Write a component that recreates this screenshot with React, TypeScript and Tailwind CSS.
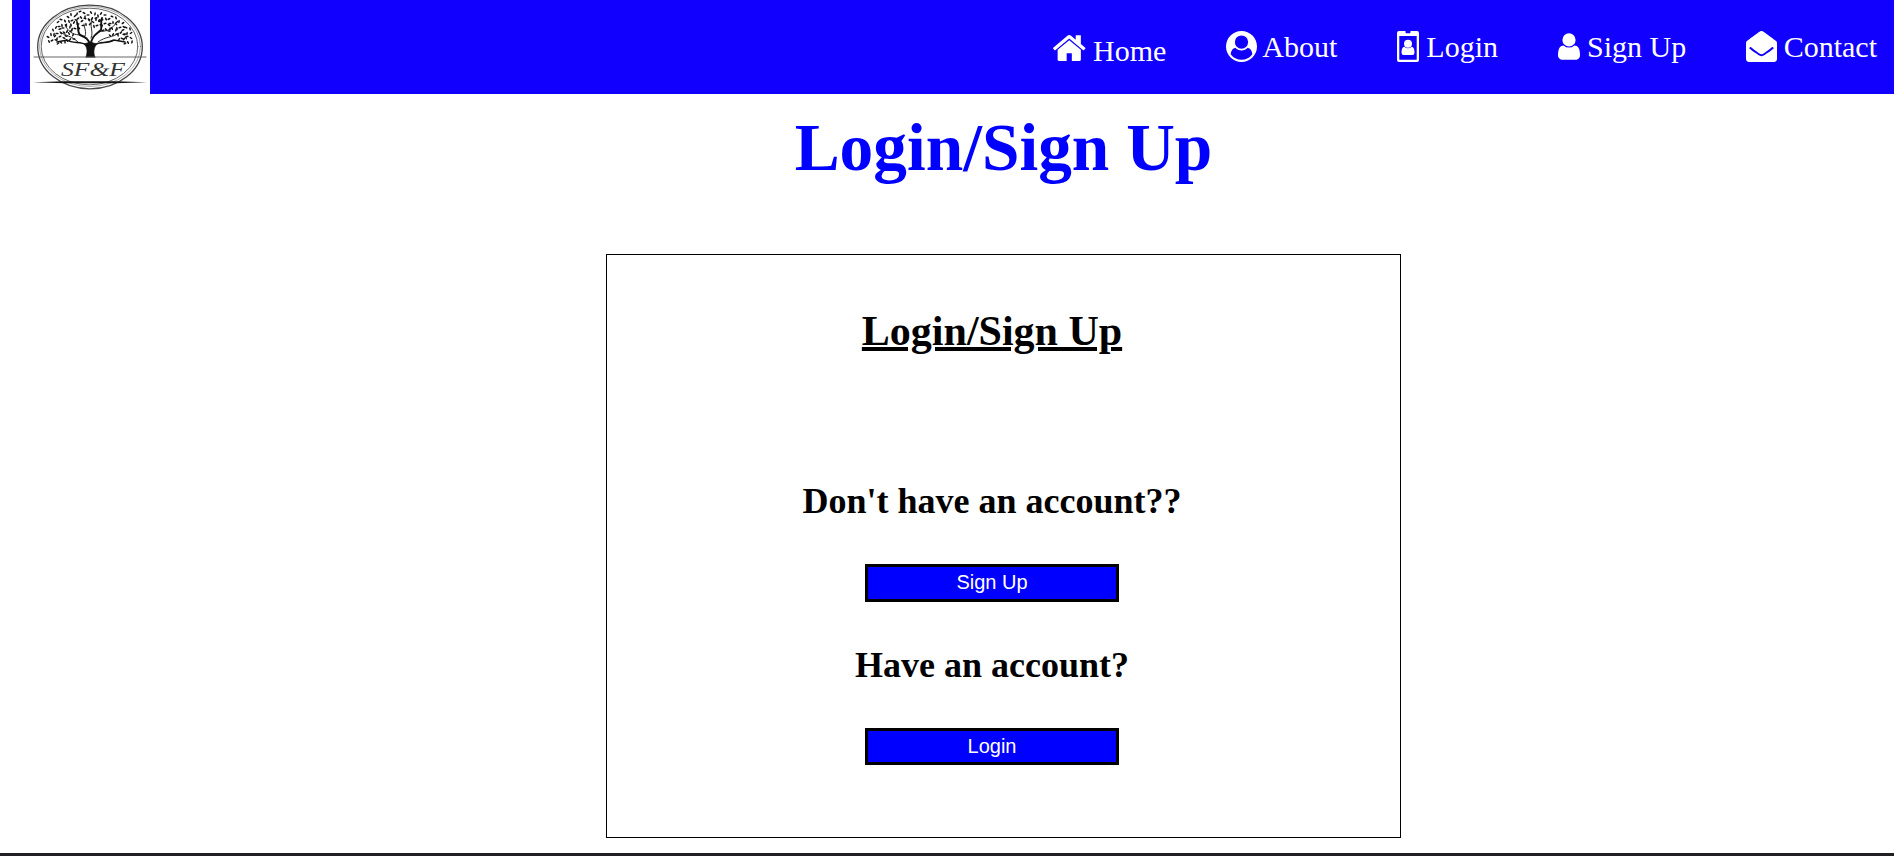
import type { ReactNode } from "react";
import { FaEnvelopeOpen } from "react-icons/fa";

const HOME =
  "M1408 992v480q0 26-19 45t-45 19h-384v-384h-256v384h-384q-26 0-45-19t-19-45v-480q0-1 .5-3t.5-3l575-474 575 474q1 2 1 6zm223-69l-62 74q-8 9-21 11h-3q-13 0-21-7l-692-577-692 577q-12 8-24 7-13-2-21-11l-62-74q-8-10-7-23.5t11-21.5l719-599q32-26 76-26t76 26l244 204v-195q0-14 9-23t23-9h192q14 0 23 9t9 23v408l219 182q10 8 11 21.5t-7 23.5z";
const USER_CIRCLE =
  "M1523 1339q-22-155-87.5-257.5t-184.5-118.5q-67 74-159.5 115.5t-195.5 41.5-195.5-41.5-159.5-115.5q-119 16-184.5 118.5t-87.5 257.5q106 150 271 237.5t356 87.5 356-87.5 271-237.5zm-243-699q0-159-112.5-271.5t-271.5-112.5-271.5 112.5-112.5 271.5 112.5 271.5 271.5 112.5 271.5-112.5 112.5-271.5zm512 256q0 182-71 347.5t-190.5 286-285.5 191.5-349 71-348-71-286-191-191-286-71-348 71-348 191-286 286-191 348-71 348 71 286 191 191 286 71 348z";
const USER =
  "M1536 1399q0 109-62.500 187t-150.500 78h-854q-88 0-150.500-78t-62.500-187q0-85 8.500-160.500t31.500-152 58.500-131 94-89 134.500-34.500q131 128 313 128t313-128q76 0 134.500 34.500t94 89 58.500 131 31.500 152 8.500 160.500zm-256-887q0 159-112.500 271.500t-271.500 112.500-271.500-112.500-112.500-271.500 112.500-271.500 271.500-112.500 271.500 112.500 112.500 271.500z";

// Leaf clusters of the logo tree: centre x, centre y.
const CLUSTERS: [number, number][] = [
  [22, 38], [27, 31], [31, 40], [32, 23], [37, 29], [42, 18], [45, 26], [51, 15], [56, 22],
  [62, 16], [67, 23], [72, 17], [76, 27], [83, 20], [83, 32], [90, 25], [92, 36], [98, 40], [97, 31], [40, 37],
];
const LEAVES: [number, number, number][] = [
  [-4, -1, 30], [-1, -3.5, 80], [3, -2, -50], [4, 2, 15], [0, 2.5, -30], [-3, 3.5, 65],
];

function Logo() {
  return (
    <svg viewBox="0 0 120 94" className="h-[94px] w-[120px] shrink-0 bg-white" fill="none" stroke="#222" strokeLinecap="round">
      <ellipse cx="60" cy="47" rx="52.3" ry="41.8" strokeWidth="1.3" stroke="#444" />
      <ellipse cx="60" cy="46.500" rx="50.500" ry="40" strokeWidth="0.6" stroke="#777" />
      <ellipse cx="59.500" cy="46.500" rx="48.300" ry="38.300" strokeWidth="1" stroke="#666" />
      <g stroke="#111">
        <path d="M56 57C58 51 57 47 54 44L60 42L67 44C64 47 63 52 65 57Z" fill="#111" strokeWidth="0.6" />
        <path d="M60 45C59 39 55 37 50 35C47 32 49 27 47 22M61 45C61 36 67 34 71 30C72 26 70 23 72 18" strokeWidth="1.900" />
        <path d="M57 45C50 41 43 44 37 40L27 42M64 45C71 41 77 44 84 40L95 42" strokeWidth="1.500" />
        <path d="M51 35C44 35 40 33 36 27M61 38C64 31 59 27 62 19M70 31C77 32 82 29 86 23M55 36C57 32 54 28 54 24M68 42C76 36 82 38 89 33M48 42C42 36 36 36 30 32" strokeWidth="0.900" />
      </g>
      <g fill="#111" stroke="none">
        {CLUSTERS.map(([x, y], c) =>
          LEAVES.map(([dx, dy, a], l) => (
            <ellipse key={`${c}-${l}`} cx={x + dx} cy={y + dy} rx="1.700" ry="0.800" transform={`rotate(${a + c * 37} ${x + dx} ${y + dy})`} />
          )),
        )}
      </g>
      <path d="M4 57H116" strokeWidth="0.9" stroke="#555" />
      <path d="M3 82.300L35 81.300H85L117 82.300L85 83.200H35Z" fill="#111" stroke="none" />
      <text
        x="31"
        y="75.500"
        textLength="64"
        lengthAdjust="spacingAndGlyphs"
        fontSize="19"
        fontStyle="italic"
        fontFamily="'Liberation Serif', serif"
        fill="#333"
        stroke="none"
      >
        SF&amp;F
      </text>
    </svg>
  );
}

function Glyph({ d, box, className }: { d: string; box: string; className: string }) {
  return (
    <svg viewBox={box} className={className} fill="currentColor">
      <path d={d} />
    </svg>
  );
}

function Badge() {
  return (
    <svg viewBox="0 0 22 31" className="mr-[7.500px] h-[31px] w-[22px]" fill="currentColor">
      <path
        fillRule="evenodd"
        d="M2 0H8.500V1.500Q8.500 2.200 9.200 2.200H12.800Q13.500 2.200 13.500 1.500V0H20Q22 0 22 2V29Q22 31 20 31H2Q0 31 0 29V2Q0 0 2 0ZM2.300 5V28.200Q2.300 28.800 2.900 28.800H19.100Q19.700 28.800 19.700 28.200V5Z"
      />
      <circle cx="11" cy="12.800" r="4" />
      <path d="M7.300 15.800Q11 18.800 14.700 15.800Q17.500 16.300 17.500 21.500Q17.500 24 15.500 24H6.500Q4.500 24 4.500 21.500Q4.500 16.300 7.300 15.800Z" />
    </svg>
  );
}

function NavItem({ icon, label, className = "" }: { icon: ReactNode; label: string; className?: string }) {
  return (
    <a className={`flex items-start leading-8 ${className}`}>
      {icon}
      {label}
    </a>
  );
}

function Action({ title, label, className }: { title: string; label: string; className: string }) {
  return (
    <>
      <h3 className="text-[36px] leading-10 font-bold">{title}</h3>
      <button className={`mt-[43px] w-[254px] border-3 border-black bg-[#0000ff] pb-[2px] font-['Liberation_Sans',sans-serif] text-xl leading-none text-white ${className}`}>
        {label}
      </button>
    </>
  );
}

export default function App() {
  return (
    <div className="flex h-[856px] flex-col overflow-hidden bg-white font-['Liberation_Serif',serif] text-black">
      <header className="ml-3 flex h-[94px] shrink-0 justify-between bg-[#1200ff] pr-[17px] pl-[18px] text-white">
        <Logo />
        <nav className="flex gap-[59.500px] pt-[31px] text-[30px]">
          <NavItem className="pt-1" label="Home" icon={<Glyph d={HOME} box="26 253 1612 1283" className="mr-[7.500px] h-[26px] w-[32.500px]" />} />
          <NavItem label="About" icon={<Glyph d={USER_CIRCLE} box="0 0 1792 1792" className="mr-[5.500px] size-[31px]" />} />
          <NavItem label="Login" icon={<Badge />} />
          <NavItem label="Sign Up" icon={<Glyph d={USER} box="256 0 1280 1792" className="mr-[7.500px] h-[31px] w-[22px]" />} />
          <NavItem label="Contact" icon={<FaEnvelopeOpen className="mr-[7px] size-[31px]" />} />
        </nav>
      </header>
      <main className="flex grow flex-col items-center pl-[113px]">
        <h1 className="mt-4 text-[67.400px] leading-[76px] font-bold text-[#0000ff]">Login/Sign Up</h1>
        <section className="mt-[68px] flex h-[584px] w-[795px] flex-col items-center border border-black pr-[23px]">
          <h2 className="mt-[52px] mb-[126px] text-[42px] leading-[48px] font-bold underline decoration-4 underline-offset-2">Login/Sign Up</h2>
          <Action title="Don't have an account??" label="Sign Up" className="mb-[43px] h-[38px]" />
          <Action title="Have an account?" label="Login" className="h-[37px]" />
        </section>
      </main>
      <div className="h-[3px] shrink-0 bg-[#202022]" />
    </div>
  );
}
